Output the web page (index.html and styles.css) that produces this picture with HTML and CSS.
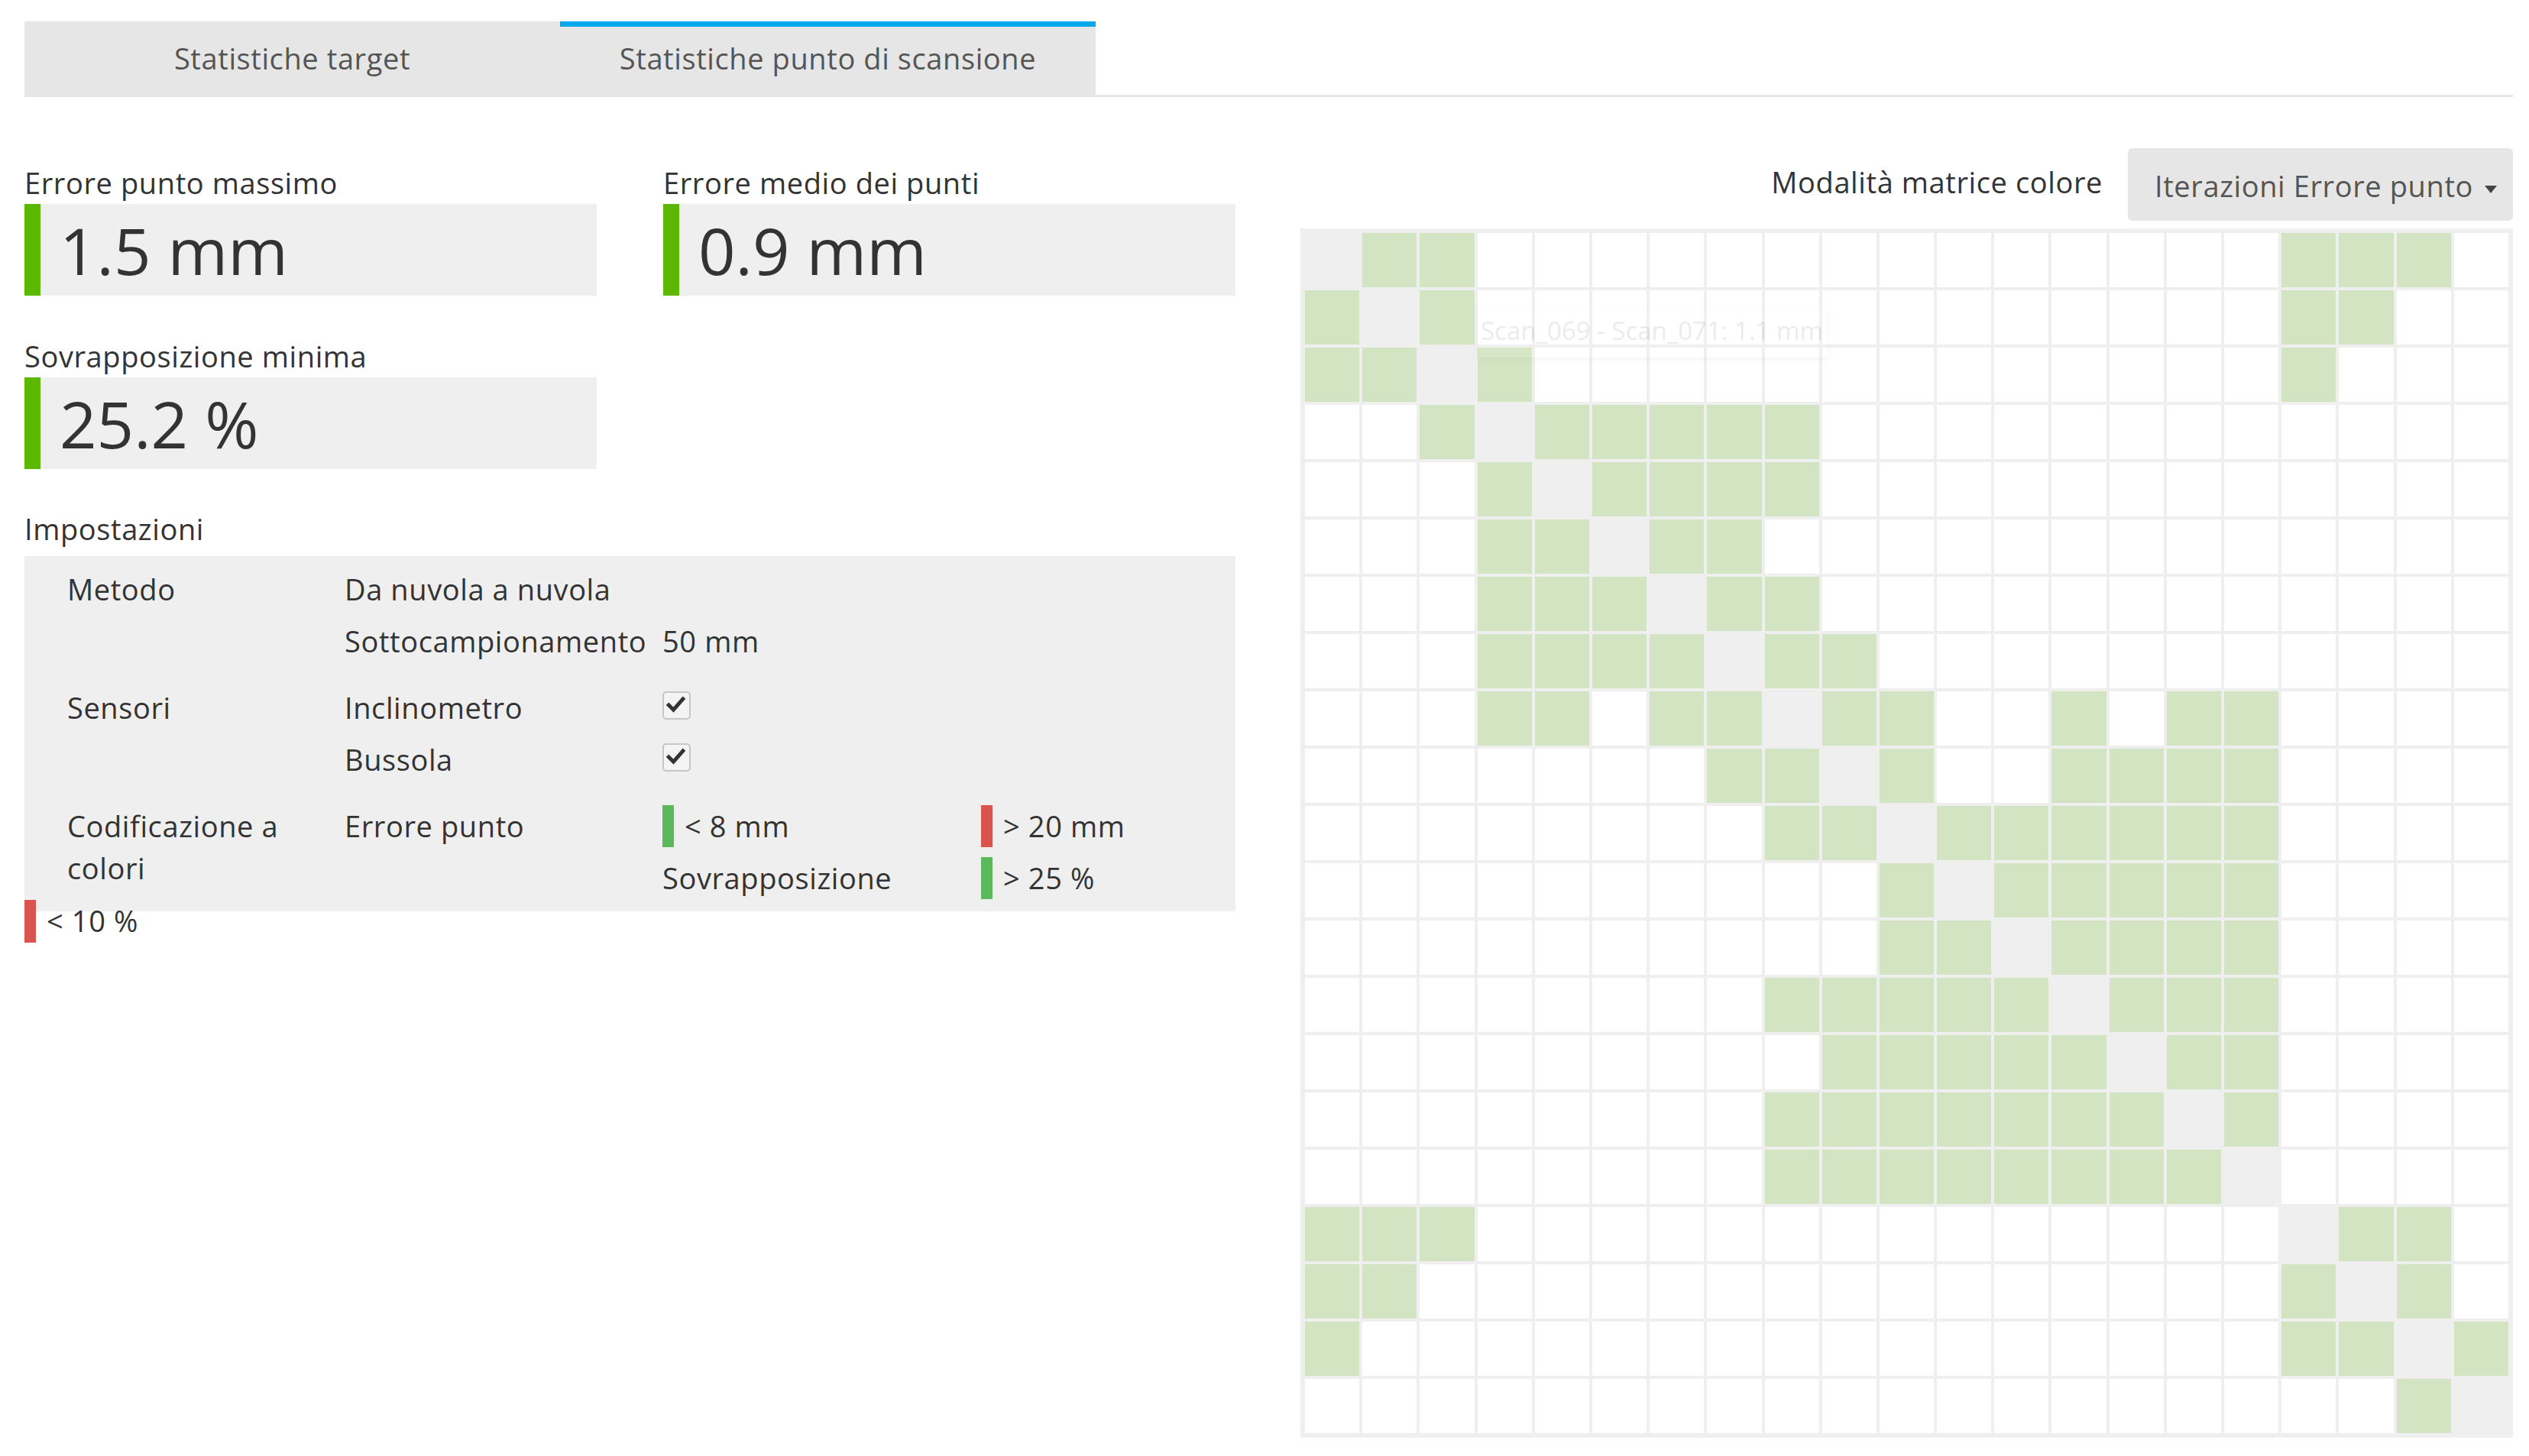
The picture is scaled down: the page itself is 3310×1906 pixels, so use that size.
FILE: index.html
```html
<!DOCTYPE html>
<html lang="it">
<head>
    <meta charset="UTF-8">
    <title>Statistiche punto di scansione</title>
    <link rel="stylesheet" href="styles.css">
</head>
<body>
<div class="page">

    <div class="tabs">
        <div class="tab">Statistiche target</div>
        <div class="tab active">Statistiche punto di scansione</div>
    </div>

    <div class="content">
        <div class="left">
            <div class="stats">
                <div class="stat">
                    <div class="stat-label">Errore punto massimo</div>
                    <div class="stat-value">1.5 mm</div>
                </div>
                <div class="stat">
                    <div class="stat-label">Errore medio dei punti</div>
                    <div class="stat-value">0.9 mm</div>
                </div>
            </div>
            <div class="stats">
                <div class="stat">
                    <div class="stat-label">Sovrapposizione minima</div>
                    <div class="stat-value">25.2 %</div>
                </div>
            </div>

            <div class="section-title">Impostazioni</div>
            <div class="settings">
                <div class="group">
                    <div>Metodo</div>
                    <div>Da nuvola a nuvola</div>
                    <div></div>
                    <div></div>
                    <div></div>
                    <div>Sottocampionamento</div>
                    <div>50 mm</div>
                    <div></div>
                </div>
                <div class="group">
                    <div>Sensori</div>
                    <div>Inclinometro</div>
                    <div><span class="check"><svg viewBox="0 0 36 36" width="32" height="32"><path d="M7 18 L14 25 L28 9" fill="none" stroke="#333" stroke-width="5.5" stroke-linecap="square"/></svg></span></div>
                    <div></div>
                    <div></div>
                    <div>Bussola</div>
                    <div><span class="check"><svg viewBox="0 0 36 36" width="32" height="32"><path d="M7 18 L14 25 L28 9" fill="none" stroke="#333" stroke-width="5.5" stroke-linecap="square"/></svg></span></div>
                    <div></div>
                </div>
                <div class="group">
                    <div class="span2">Codificazione a colori</div>
                    <div class="span2">Errore punto</div>
                    <div class="legend"><span class="bar green"></span>&lt; 8 mm</div>
                    <div class="legend"><span class="bar red"></span>&gt; 20 mm</div>
                    <div>Sovrapposizione</div>
                    <div class="legend"><span class="bar green"></span>&gt; 25 %</div>
                </div>
            </div>
            <div class="legend spill"><span class="bar red"></span>&lt; 10 %</div>
        </div>

        <div class="right">
            <div class="matrix-head">
                <span class="matrix-label">Modalità matrice colore</span>
                <div class="dropdown">Iterazioni Errore punto<span class="caret"></span></div>
            </div>
            <div class="matrix-wrap">
                <div class="matrix" id="matrix"></div>
                <div class="tip">Scan_069 - Scan_071: 1.1 mm</div>
            </div>
        </div>
    </div>
</div>

<script>
    // colonne verdi per ogni riga della matrice
    var verdi = [
        [1, 2, 17, 18, 19],
        [0, 2, 17, 18],
        [0, 1, 3, 17],
        [2, 4, 5, 6, 7, 8],
        [3, 5, 6, 7, 8],
        [3, 4, 6, 7],
        [3, 4, 5, 7, 8],
        [3, 4, 5, 6, 8, 9],
        [3, 4, 6, 7, 9, 10, 13, 15, 16],
        [7, 8, 10, 13, 14, 15, 16],
        [8, 9, 11, 12, 13, 14, 15, 16],
        [10, 12, 13, 14, 15, 16],
        [10, 11, 13, 14, 15, 16],
        [8, 9, 10, 11, 12, 14, 15, 16],
        [9, 10, 11, 12, 13, 15, 16],
        [8, 9, 10, 11, 12, 13, 14, 16],
        [8, 9, 10, 11, 12, 13, 14, 15],
        [0, 1, 2, 18, 19],
        [0, 1, 17, 19],
        [0, 17, 18, 20],
        [19]
    ];

    var matrix = document.getElementById("matrix");
    var html = "";
    for (var r = 0; r < verdi.length; r++) {
        for (var c = 0; c < verdi.length; c++) {
            var cls = "cell";
            if (r === c) cls += " diag";
            else if (verdi[r].indexOf(c) >= 0) cls += " ok";
            html += '<div class="' + cls + '"></div>';
        }
    }
    matrix.innerHTML = html;
</script>
</body>
</html>
```

FILE: styles.css
```css
body { margin: 0; font-family: "Open Sans", "DejaVu Sans", sans-serif; font-size: 38px; line-height: 55px; letter-spacing: 0.6px; color: #333; background: #fff; }

.page { padding: 28px 21px 0 32px; }

/* tabs */
.tabs { display: flex; border-bottom: 3px solid #e6e6e6; }
.tab { width: 701px; height: 96px; display: flex; align-items: center; justify-content: center; background: #e6e6e6; color: #555; }
.tab.active { box-shadow: inset 0 7px 0 #02a8ec; }

.content { display: flex; gap: 85px; }
.left { width: 1585px; padding-top: 85px; }
.right { width: 1587px; padding-top: 67px; }

/* valori */
.stats { display: flex; gap: 87px; margin-bottom: 52px; }
.stat { width: 749px; }
.stat-value { height: 120px; line-height: 120px; font-size: 85px; letter-spacing: 0; background: #efefef; border-left: 21px solid #5cb700; padding-left: 25px; }

.section-title { margin-top: -1px; margin-bottom: 8px; }

.settings { background: #efefef; padding: 16px 0 16px 56px; }
.group { display: grid; grid-template-columns: 363px 416px 417px 1fr; row-gap: 13px; }
.group + .group { margin-top: 32px; }
.span2 { grid-row: span 2; }

.check { display: inline-block; width: 33px; height: 33px; margin-top: 6px; border: 2px solid #c6c6c6; border-radius: 5px; background: #f4f4f4; vertical-align: top; }
.check svg { display: block; }

.legend { display: flex; }
.bar { width: 15px; margin-right: 14px; }
.bar.green { background: #5cb85c; }
.bar.red { background: #d9534f; }
.spill { margin-top: -15px; height: 56px; }

/* matrice */
.matrix-head { display: flex; justify-content: flex-end; align-items: center; gap: 33px; height: 95px; }
.matrix-label { margin-bottom: 6px; }
.dropdown { height: 95px; box-sizing: border-box; padding: 22px 21px 18px 35px; background: #e6e6e6; border-radius: 6px; color: #555; }
.caret { display: inline-block; margin-left: 15px; vertical-align: middle; border-top: 10px solid #444; border-left: 8px solid transparent; border-right: 8px solid transparent; }

.matrix-wrap { position: relative; margin-top: 10px; }
.matrix { display: grid; grid-template-columns: repeat(21, 1fr); gap: 4px; padding: 6px; background: #efefef; }
.cell { height: 71px; background: #fff; }
.cell.ok { background: #d2e4c1; }
.cell.diag { background: #efefef; }

.tip { position: absolute; left: 233px; top: 104px; width: 457px; height: 65px; box-sizing: border-box; padding: 2px 0 0 3px; font-size: 33px; line-height: 55px; letter-spacing: 0; background: #fff; color: #333; box-shadow: 0 2px 6px rgba(0, 0, 0, 0.4); opacity: 0.09; white-space: nowrap; }
```
